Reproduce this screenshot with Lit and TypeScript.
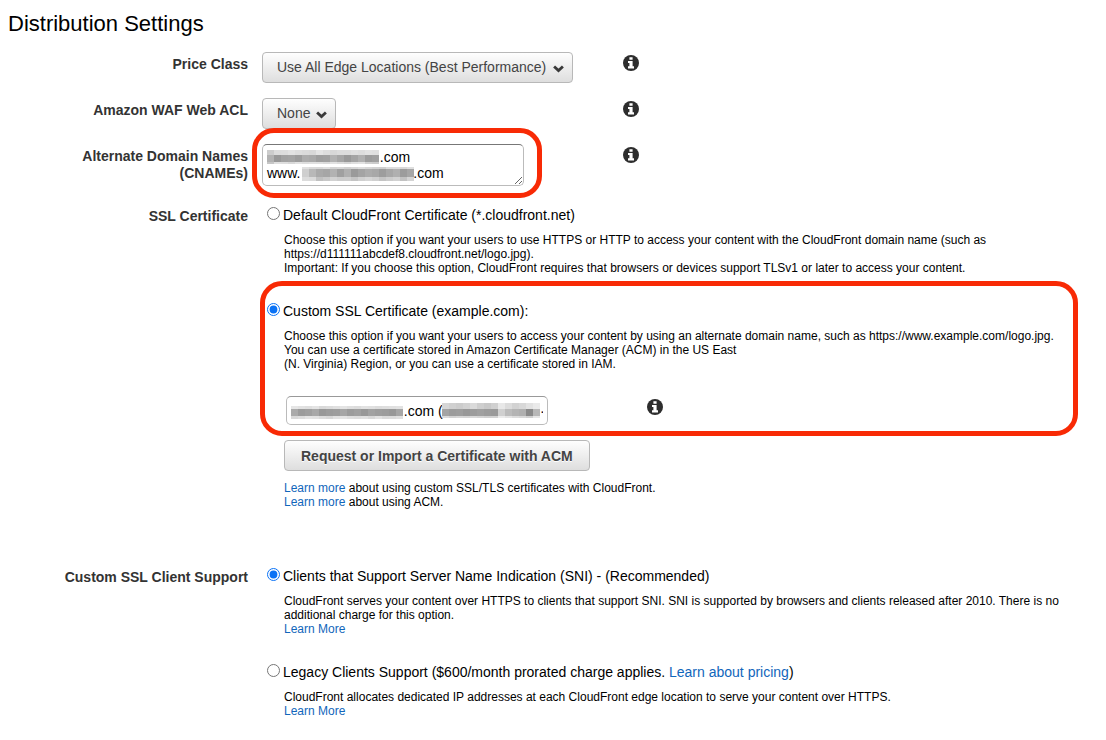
import { LitElement, html, svg, css } from "lit";
import { customElement, property } from "lit/decorators.js";

const sp = (n: number) => "\u00a0".repeat(n);

@customElement("info-icon")
class InfoIcon extends LitElement {
  static styles = css`
    :host { display: block; width: 16px; height: 16px; }
    .icon { display: block; }
  `;
  render() {
    return html`<svg class="icon" width="16" height="16" viewBox="0 0 16 16" role="img" aria-label="Info">
      <circle cx="8" cy="8" r="8" fill="#2d2d2d" />
      <path fill="#fff" d="M6.4 2.2h3.2v2.6H6.4zM5 5.9h4.6v5.3H11v2.2H5v-2.2h1.4V8.1H5z" />
    </svg>`;
  }
}

@customElement("pixel-mask")
class PixelMask extends LitElement {
  @property({ attribute: false }) rows: string[] = [];
  @property({ attribute: false }) heights: number[] = [];
  static styles = css`
    :host { display: block; }
    .mask { display: block; }
  `;
  render() {
    const cell = 7;
    const total = this.heights.reduce((a, b) => a + b, 0);
    const width = cell * (this.rows[0] ?? "").split(" ").length;
    let y = 0;
    const rects = this.rows.flatMap((row, r) => {
      const top = y;
      const h = this.heights[r];
      y += h;
      return row.split(" ").map(
        (c, i) => svg`<rect x=${i * cell} y=${top} width=${cell} height=${h} fill=${"#" + c + c + c} />`
      );
    });
    return html`<svg class="mask" width=${width} height=${total} shape-rendering="crispEdges" aria-hidden="true">${rects}</svg>`;
  }
}

@customElement("app-root")
class AppRoot extends LitElement {
  static styles = css`
    :host {
      display: block;
      padding: 8px;
      background: #fff;
      color: #000;
      font: 14px/16px "Liberation Sans", Arial, sans-serif;
    }
    * { box-sizing: border-box; }
    .title { margin: 0 0 12px; font-size: 22px; line-height: 32px; font-weight: 400; }
    .form { display: flex; flex-direction: column; gap: 15px; }
    .row { display: grid; grid-template-columns: 240px 1fr; column-gap: 14px; }
    .row.late { margin-top: 41px; }
    .label { padding-top: 4px; text-align: right; font-weight: 700; line-height: 17px; color: #333; }
    .field { display: grid; grid-template-columns: 361px 16px; align-items: start; }
    .field info-icon { margin-top: 3px; }
    .picker { position: relative; display: inline-block; justify-self: start; height: 31px; }
    .select, .button {
      height: 31px;
      border: 1px solid #b8b8b8;
      border-radius: 4px;
      background: linear-gradient(#fefefe, #dedede);
      color: #444;
      font: inherit;
    }
    .select { appearance: none; padding: 0 24px 2px 14px; }
    .chevron { position: absolute; right: 9px; top: 13px; pointer-events: none; }
    .redacted { position: relative; justify-self: start; }
    .names { height: 45px; }
    .text {
      display: block;
      width: 262px;
      margin: 0;
      border: 1px solid #bbb;
      border-top-color: #777;
      border-radius: 5px;
      background: #fff;
      color: #000;
      font: inherit;
    }
    .area { height: 42px; padding: 4px; line-height: 16px; overflow: auto; }
    .line { height: 29px; padding: 0 4px; border-top-color: #999; }
    .mask-a { position: absolute; left: 5px; top: 6px; }
    .mask-b { position: absolute; left: 40px; top: 23px; }
    .mask-c { position: absolute; left: 5px; top: 10px; }
    .mask-d { position: absolute; left: 156px; top: 7px; }
    .ring { position: relative; }
    .ring::after {
      content: "";
      position: absolute;
      border: 5px solid #f82a05;
      border-radius: 22px;
      pointer-events: none;
    }
    .ring-small::after { inset: -16px -18px -9px -10px; }
    .ring-large::after { inset: -22px 20px -11px -2px; }
    .options { display: flex; flex-direction: column; gap: 28px; padding-top: 3px; }
    .choice { display: flex; align-items: flex-start; gap: 3px; padding-left: 5px; }
    .radio { width: 13px; height: 13px; margin: 0; accent-color: #0a72f5; }
    .body { padding-left: 22px; }
    .note { margin: 10px 0 0; font-size: 12px; line-height: 14px; }
    .cert { margin: 25px 0 0 2px; }
    .after { margin-top: -13px; }
    .button { padding: 0 16px; font-weight: 700; text-shadow: 0 1px #fff; display: block; }
    .link { color: #1166bb; text-decoration: none; }
  `;

  private picker(id: string, text: string) {
    return html`<div class="picker">
      <select class="select" id=${id}><option>${text}</option></select>
      <svg class="chevron" width="11" height="8" viewBox="0 0 11 8" aria-hidden="true">
        <path d="M1.1 1.4 L5.5 5.5 L9.9 1.4" fill="none" stroke="#3a3a3a" stroke-width="2.8" />
      </svg>
    </div>`;
  }

  private choice(group: string, id: string, text: unknown, checked = false) {
    return html`<div class="choice">
      <input class="radio" type="radio" name=${group} id=${id} ?checked=${checked} />
      <label for=${id}>${text}</label>
    </div>`;
  }

  render() {
    const more = (t: string) => html`<a class="link" href="#">${t}</a>`;
    return html`
      <h1 class="title">Distribution Settings</h1>
      <form class="form">
        <div class="row">
          <label class="label" for="price">Price Class</label>
          <div class="field">${this.picker("price", "Use All Edge Locations (Best Performance)")}<info-icon></info-icon></div>
        </div>
        <div class="row">
          <label class="label" for="acl">Amazon WAF Web ACL</label>
          <div class="field">${this.picker("acl", "None")}<info-icon></info-icon></div>
        </div>
        <div class="row">
          <label class="label" for="names">Alternate Domain Names<br />(CNAMEs)</label>
          <div class="field">
            <div class="redacted names ring ring-small">
              <textarea class="text area" id="names" .value=${sp(29) + ".com\nwww." + sp(29) + ".com"}></textarea>
              <pixel-mask class="mask-a" .rows=${[
                "cc dc dd e2 dd da d8 e4 dd d8 dc dc e0 dd e2 e0",
                "b2 98 a2 a4 9c ac a9 9e a0 b2 a6 99 a4 b0 9c a0",
                "c6 e0 de d8 e2 dd e0 df da e2 dc d6 df e2 d0 cc",
              ]} .heights=${[5, 7, 2]}></pixel-mask>
              <pixel-mask class="mask-b" .rows=${[
                "e0 d9 d8 de d3 d7 d0 d6 dc d6 d2 cf dc dd d8 df",
                "cf b8 aa a6 b2 a0 b0 9a a4 ac a8 9d a8 b0 9c a6",
                "dc da c0 c8 d2 cc cd c4 d0 d6 d0 c4 cc d2 c2 d4",
              ]} .heights=${[2, 8, 4]}></pixel-mask>
            </div>
            <info-icon></info-icon>
          </div>
        </div>
        <div class="row">
          <div class="label">SSL Certificate</div>
          <div class="options">
            <div>
              ${this.choice("ssl", "ssl-default", "Default CloudFront Certificate (*.cloudfront.net)")}
              <div class="body">
                <p class="note">
                  Choose this option if you want your users to use HTTPS or HTTP to access your content with the CloudFront domain name (such as
                  https://d111111abcdef8.cloudfront.net/logo.jpg).<br />Important: If you choose this option, CloudFront requires that browsers or devices support TLSv1 or later to access your content.
                </p>
              </div>
            </div>
            <div class="ring ring-large">
              ${this.choice("ssl", "ssl-custom", "Custom SSL Certificate (example.com):", true)}
              <div class="body">
                <p class="note">
                  Choose this option if you want your users to access your content by using an alternate domain name, such as https://www.example.com/logo.jpg.<br />You
                  can use a certificate stored in Amazon Certificate Manager (ACM) in the US East<br />(N. Virginia) Region, or you can use a certificate stored in IAM.
                </p>
                <div class="field cert">
                  <div class="redacted">
                    <input class="text line" type="text" aria-label="Custom SSL certificate" .value=${sp(29) + ".com (" + sp(25) + "·"} />
                    <pixel-mask class="mask-c" .rows=${[
                      "e6 e2 df e4 d9 dc e0 e4 df dc e2 e0 dc de e0 e2",
                      "aa 9c a0 a8 98 9c 9e a6 9c a0 98 a2 9e 9c 98 a6",
                      "d8 dd e4 e2 dc d8 e2 e4 df dd e0 d9 e2 da dc e0",
                    ]} .heights=${[3, 7, 3]}></pixel-mask>
                    <pixel-mask class="mask-d" .rows=${[
                      "d6 d0 cc d2 da ce c8 d0 e8 dc d2 d8 e2 ea",
                      "a4 9c 9e 98 9c a0 9c 9a d0 bc b4 b0 8a b8",
                      "da d2 d6 d4 d8 d4 d0 d2 ec e4 dc d8 d0 e6",
                    ]} .heights=${[6, 7, 2]}></pixel-mask>
                  </div>
                  <info-icon></info-icon>
                </div>
              </div>
            </div>
            <div class="body after">
              <button class="button" type="button">Request or Import a Certificate with ACM</button>
              <p class="note">
                ${more("Learn more")} about using custom SSL/TLS certificates with CloudFront.<br />${more("Learn more")} about using ACM.
              </p>
            </div>
          </div>
        </div>
        <div class="row late">
          <div class="label">Custom SSL Client Support</div>
          <div class="options">
            <div>
              ${this.choice("client", "client-sni", "Clients that Support Server Name Indication (SNI) - (Recommended)", true)}
              <div class="body">
                <p class="note">
                  CloudFront serves your content over HTTPS to clients that support SNI. SNI is supported by browsers and clients released after 2010. There is no additional charge for this option.<br />${more("Learn More")}
                </p>
              </div>
            </div>
            <div>
              ${this.choice("client", "client-legacy", html`Legacy Clients Support ($600/month prorated charge applies. ${more("Learn about pricing")})`)}
              <div class="body">
                <p class="note">
                  CloudFront allocates dedicated IP addresses at each CloudFront edge location to serve your content over HTTPS.<br />${more("Learn More")}
                </p>
              </div>
            </div>
          </div>
        </div>
      </form>
    `;
  }
}
